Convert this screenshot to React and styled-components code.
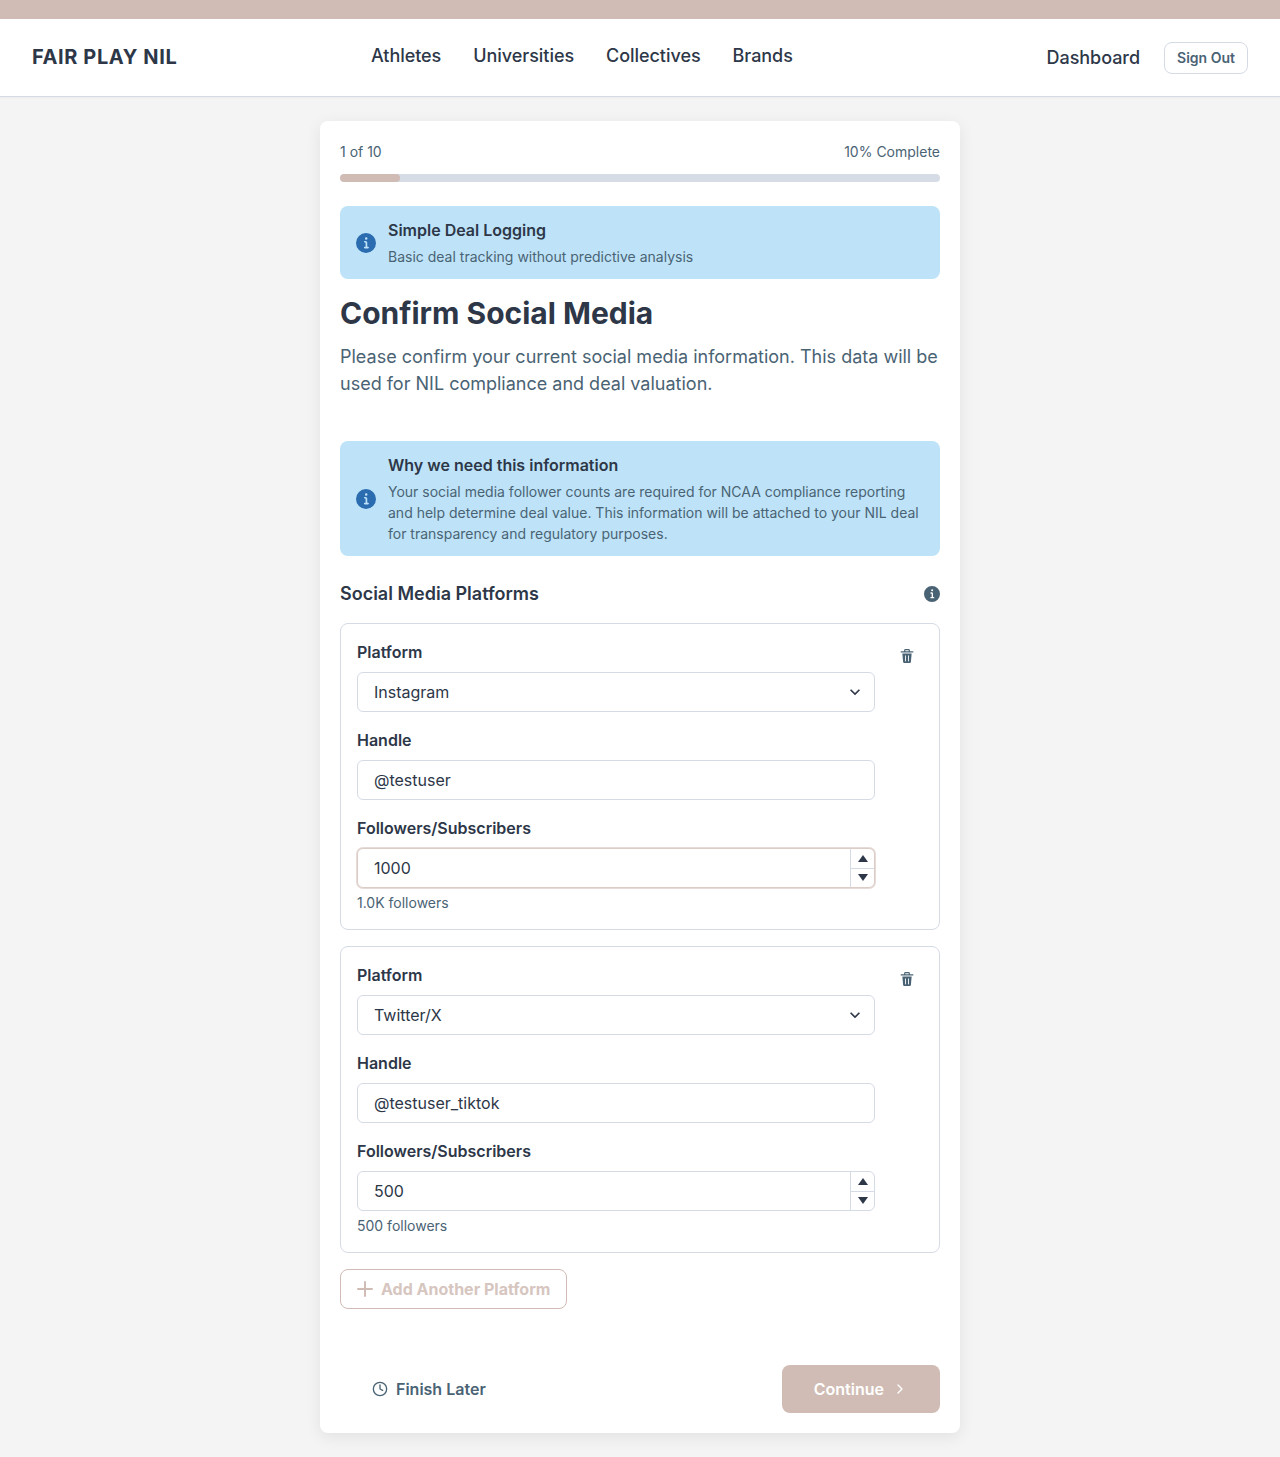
import React from 'react';
import styled, { createGlobalStyle } from 'styled-components';
import { Clock, ChevronRight } from 'lucide-react';

const TAN = '#d0bcb4';
const INK = '#2d3748';
const MUTED = '#4a6374';
const LINE = '#d5dbe5';

const GlobalStyle = createGlobalStyle`
  * { box-sizing: border-box; }
  html, body { margin: 0; padding: 0; }
  body {
    background: #f4f4f4;
    color: ${INK};
    font-family: Inter, "Noto Sans", "Liberation Sans", sans-serif;
  }
`;

/**
 * Icons
 */
const InfoIcon = ({ size = 20, color }) => (
  <svg width={size} height={size} viewBox="0 0 24 24" fill={color} style={{ flexShrink: 0 }}>
    <path d="M12,0A12,12,0,1,0,24,12,12.013,12.013,0,0,0,12,0Zm.25,5a1.5,1.5,0,1,1-1.5,1.5A1.5,1.5,0,0,1,12.25,5ZM14.5,18.5h-4a1,1,0,0,1,0-2h.75a.25.25,0,0,0,.25-.25v-4.5a.25.25,0,0,0-.25-.25H10.5a1,1,0,0,1,0-2h1a2,2,0,0,1,2,2v4.75a.25.25,0,0,0,.25.25h.75a1,1,0,1,1,0,2Z" />
  </svg>
);

const TrashIcon = () => (
  <svg width="14" height="14" viewBox="0 0 24 24" fill={MUTED}>
    <path d="M19.452 7.5H4.547a.5.5 0 00-.5.545l1.287 14.136A2 2 0 007.326 24h9.347a2 2 0 001.992-1.819L19.95 8.045a.5.5 0 00-.129-.382.5.5 0 00-.369-.163zm-9.2 13a.75.75 0 01-1.5 0v-9a.75.75 0 011.5 0zm5 0a.75.75 0 01-1.5 0v-9a.75.75 0 011.5 0z" />
    <path d="M22 4h-4.75a.25.25 0 01-.25-.25V2.5A2.5 2.5 0 0014.5 0h-5A2.5 2.5 0 007 2.5v1.25a.25.25 0 01-.25.25H2a1 1 0 000 2h20a1 1 0 000-2zM9 3.75V2.5a.5.5 0 01.5-.5h5a.5.5 0 01.5.5v1.25a.25.25 0 01-.25.25h-5.5A.25.25 0 019 3.75z" />
  </svg>
);

const PlusIcon = () => (
  <svg width="16" height="16" viewBox="0 0 24 24" fill={TAN}>
    <path d="M0,12a1.5,1.5,0,0,0,1.5,1.5h8.75a.25.25,0,0,1,.25.25V22.5a1.5,1.5,0,0,0,3,0V13.75a.25.25,0,0,1,.25-.25H22.5a1.5,1.5,0,0,0,0-3H13.75a.25.25,0,0,1-.25-.25V1.5a1.5,1.5,0,0,0-3,0v8.75a.25.25,0,0,1-.25.25H1.5A1.5,1.5,0,0,0,0,12Z" />
  </svg>
);

const ChevronDownIcon = () => (
  <svg width="20" height="20" viewBox="0 0 24 24" fill={INK}>
    <path d="M16.59 8.59L12 13.17 7.41 8.59 6 10l6 6 6-6z" />
  </svg>
);

/**
 * Header
 */
const TopBar = styled.div`
  height: 19px;
  background: ${TAN};
`;

const Header = styled.header`
  height: 78px;
  padding: 0 32px;
  display: flex;
  align-items: center;
  background: #fff;
  border-bottom: 1px solid ${LINE};
  box-shadow: 0 1px 2px rgba(0, 0, 0, 0.04);
`;

const Logo = styled.div`
  flex: 0 0 339px;
  font-size: 20px;
  font-weight: 700;
  line-height: 24px;
  letter-spacing: 0.6px;
  margin-top: -1px;
`;

const Nav = styled.nav`
  display: flex;
  gap: 32px;
  margin-bottom: 5px;
`;

const NavLink = styled.a`
  font-size: 18px;
  font-weight: 500;
  line-height: 27px;
  letter-spacing: -0.05px;
`;

const HeaderRight = styled.div`
  margin-left: auto;
  display: flex;
  align-items: center;
  gap: 24px;
`;

const SignOut = styled.button`
  width: 84px;
  height: 32px;
  padding: 0;
  background: #fff;
  border: 1px solid ${LINE};
  border-radius: 8px;
  color: ${MUTED};
  font: 600 14px/21px Inter, sans-serif;
`;

/**
 * Card
 */
const Main = styled.main`
  padding: 24px 0;
`;

const Card = styled.section`
  width: 640px;
  margin: 0 auto;
  padding: 20px;
  background: #fff;
  border-radius: 8px;
  box-shadow: 0 4px 16px rgba(0, 0, 0, 0.08);
`;

const ProgressRow = styled.div`
  display: flex;
  justify-content: space-between;
  margin-bottom: 12px;
  color: ${MUTED};
  font-size: 14px;
  line-height: 21px;
`;

const ProgressTrack = styled.div`
  height: 8px;
  margin-bottom: 24px;
  border-radius: 4px;
  background: #d6dce5;
  overflow: hidden;
`;

const ProgressFill = styled.div`
  height: 100%;
  border-radius: 4px;
  background: ${TAN};
`;

const Alert = styled.div`
  display: flex;
  align-items: center;
  gap: 12px;
  padding: 12px 16px;
  border-radius: 8px;
  background: #bee3f8;
`;

const AlertTitle = styled.div`
  font-size: 16px;
  font-weight: 600;
  line-height: 24px;
  margin-bottom: 4px;
`;

const AlertText = styled.div`
  color: ${MUTED};
  font-size: 14px;
  line-height: 21px;
`;

const Title = styled.h1`
  margin: 16px 0 12px;
  font-size: 30px;
  font-weight: 700;
  line-height: 36px;
`;

const Intro = styled.p`
  margin: 0 0 44px;
  color: ${MUTED};
  font-size: 18px;
  line-height: 27px;
`;

const SectionHead = styled.div`
  display: flex;
  align-items: center;
  justify-content: space-between;
  margin: 24px 0 16px;
`;

const SectionTitle = styled.h2`
  margin: 0;
  font-size: 18px;
  font-weight: 600;
  line-height: 27px;
`;

/**
 * Platform box
 */
const PlatformBox = styled.div`
  display: flex;
  gap: 16px;
  padding: 16px;
  margin-bottom: 16px;
  border: 1px solid ${LINE};
  border-radius: 8px;
`;

const Fields = styled.div`
  flex: 1;
  display: flex;
  flex-direction: column;
  gap: 16px;
`;

const Label = styled.label`
  display: block;
  margin-bottom: 8px;
  font-size: 16px;
  font-weight: 600;
  line-height: 24px;
`;

const Control = styled.div`
  height: 40px;
  display: flex;
  align-items: center;
  background: #fff;
  border: 1px solid ${(p) => (p.$focused ? '#dccdc7' : LINE)};
  border-radius: 6px;
  box-shadow: ${(p) => (p.$focused ? '0 0 0 1px #e6dbd7' : 'none')};
  overflow: hidden;
`;

const Input = styled.input`
  flex: 1;
  min-width: 0;
  height: 100%;
  padding: 0 16px;
  border: 0;
  outline: 0;
  background: transparent;
  color: ${INK};
  font: 400 16px Inter, sans-serif;
`;

const Select = styled.select`
  flex: 1;
  min-width: 0;
  height: 100%;
  padding: 0 16px;
  border: 0;
  outline: 0;
  background: transparent;
  color: ${INK};
  font: 400 16px Inter, sans-serif;
  appearance: none;
`;

const SelectArrow = styled.span`
  display: flex;
  margin-right: 9px;
`;

const Stepper = styled.div`
  width: 24px;
  height: 100%;
  display: flex;
  flex-direction: column;
  border-left: 1px solid ${LINE};
`;

const StepButton = styled.div`
  flex: 1;
  display: flex;
  align-items: center;
  justify-content: center;
  & + & {
    border-top: 1px solid ${LINE};
  }
  &::after {
    content: '';
    border-left: 5.5px solid transparent;
    border-right: 5.5px solid transparent;
    ${(p) => (p.$down ? `border-top: 7px solid ${INK};` : `border-bottom: 7px solid ${INK};`)}
  }
`;

const Help = styled.div`
  margin-top: 4px;
  color: ${MUTED};
  font-size: 14px;
  line-height: 21px;
`;

const DeleteButton = styled.button`
  flex: 0 0 32px;
  width: 32px;
  height: 32px;
  display: flex;
  align-items: center;
  justify-content: center;
  padding: 0;
  border: 0;
  background: transparent;
`;

const AddButton = styled.button`
  height: 40px;
  display: inline-flex;
  align-items: center;
  gap: 8px;
  padding: 0 16px;
  background: #fff;
  border: 1px solid ${TAN};
  border-radius: 8px;
  color: #d6c6bf;
  font: 700 16px Inter, sans-serif;
`;

/**
 * Footer
 */
const Footer = styled.div`
  display: flex;
  justify-content: space-between;
  margin-top: 56px;
`;

const LaterButton = styled.button`
  height: 48px;
  display: inline-flex;
  align-items: center;
  gap: 8px;
  padding: 0 32px;
  border: 0;
  background: transparent;
  color: ${MUTED};
  font: 600 16px Inter, sans-serif;
`;

const ContinueButton = styled.button`
  height: 48px;
  display: inline-flex;
  align-items: center;
  gap: 8px;
  padding: 0 32px;
  border: 0;
  border-radius: 8px;
  background: ${TAN};
  color: #fff;
  font: 600 16px Inter, sans-serif;
`;

const platforms = [
  { id: 1, name: 'Instagram', handle: '@testuser', count: '1000', help: '1.0K followers', focused: true },
  { id: 2, name: 'Twitter/X', handle: '@testuser_tiktok', count: '500', help: '500 followers' },
];

function Platform({ item }) {
  return (
    <PlatformBox>
      <Fields>
        <div>
          <Label>Platform</Label>
          <Control>
            <Select defaultValue={item.name}>
              <option>Instagram</option>
              <option>Twitter/X</option>
            </Select>
            <SelectArrow>
              <ChevronDownIcon />
            </SelectArrow>
          </Control>
        </div>
        <div>
          <Label>Handle</Label>
          <Control>
            <Input defaultValue={item.handle} />
          </Control>
        </div>
        <div>
          <Label>Followers/Subscribers</Label>
          <Control $focused={item.focused}>
            <Input defaultValue={item.count} />
            <Stepper>
              <StepButton />
              <StepButton $down />
            </Stepper>
          </Control>
          <Help>{item.help}</Help>
        </div>
      </Fields>
      <DeleteButton aria-label="Delete">
        <TrashIcon />
      </DeleteButton>
    </PlatformBox>
  );
}

export default function App() {
  return (
    <>
      <GlobalStyle />
      <TopBar />
      <Header>
        <Logo>FAIR PLAY NIL</Logo>
        <Nav>
          <NavLink>Athletes</NavLink>
          <NavLink>Universities</NavLink>
          <NavLink>Collectives</NavLink>
          <NavLink>Brands</NavLink>
        </Nav>
        <HeaderRight>
          <NavLink>Dashboard</NavLink>
          <SignOut>Sign Out</SignOut>
        </HeaderRight>
      </Header>
      <Main>
        <Card>
          <ProgressRow>
            <span>1 of 10</span>
            <span>10% Complete</span>
          </ProgressRow>
          <ProgressTrack>
            <ProgressFill style={{ width: '10%' }} />
          </ProgressTrack>
          <Alert>
            <InfoIcon color="#2b6cb0" />
            <div>
              <AlertTitle>Simple Deal Logging</AlertTitle>
              <AlertText>Basic deal tracking without predictive analysis</AlertText>
            </div>
          </Alert>
          <Title>Confirm Social Media</Title>
          <Intro>
            Please confirm your current social media information. This data will be used for NIL
            compliance and deal valuation.
          </Intro>
          <Alert>
            <InfoIcon color="#2b6cb0" />
            <div>
              <AlertTitle>Why we need this information</AlertTitle>
              <AlertText>
                Your social media follower counts are required for NCAA compliance reporting and help
                determine deal value. This information will be attached to your NIL deal for
                transparency and regulatory purposes.
              </AlertText>
            </div>
          </Alert>
          <SectionHead>
            <SectionTitle>Social Media Platforms</SectionTitle>
            <InfoIcon size={16} color={MUTED} />
          </SectionHead>
          {platforms.map((item) => (
            <Platform key={item.id} item={item} />
          ))}
          <AddButton>
            <PlusIcon />
            Add Another Platform
          </AddButton>
          <Footer>
            <LaterButton>
              <Clock size={16} strokeWidth={2} />
              Finish Later
            </LaterButton>
            <ContinueButton>
              Continue
              <ChevronRight size={16} strokeWidth={2} />
            </ContinueButton>
          </Footer>
        </Card>
      </Main>
    </>
  );
}
